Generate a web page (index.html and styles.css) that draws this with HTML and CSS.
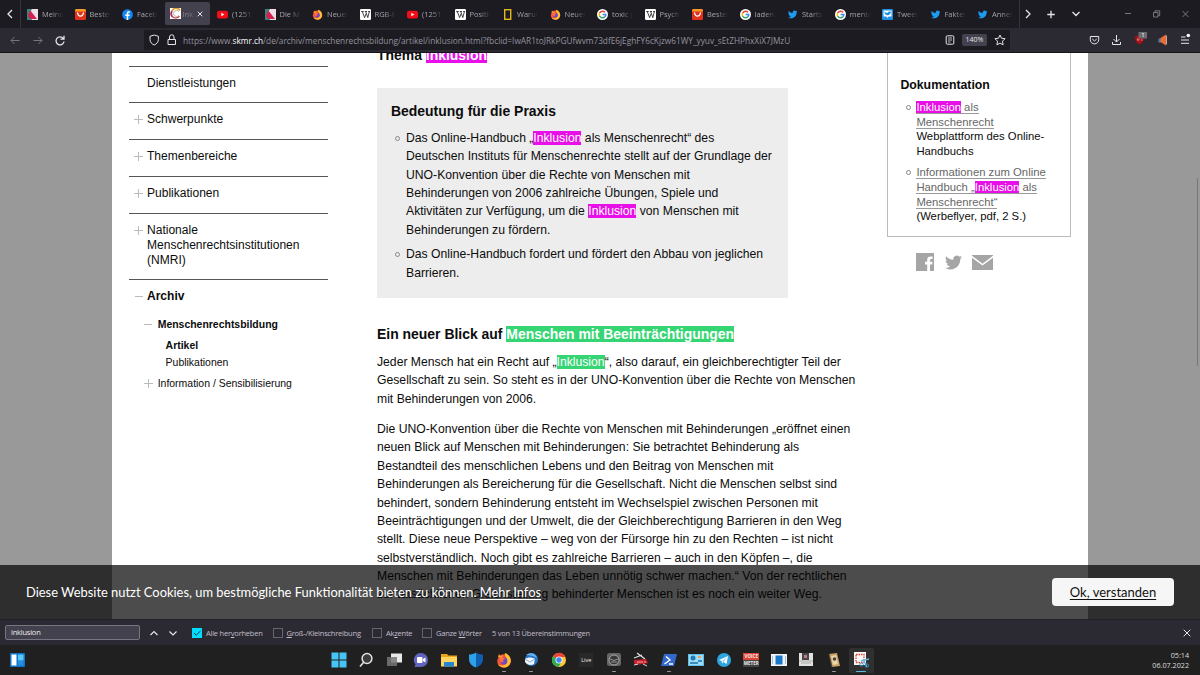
FILE: index.html
```html
<!DOCTYPE html>
<html lang="de">
<head>
<meta charset="utf-8">
<title>Inklusion</title>
<link rel="stylesheet" href="styles.css">
</head>
<body>
<svg width="0" height="0" class="defs">
  <defs>
    <symbol id="nzz" viewBox="0 0 11 11"><rect width="11" height="11" fill="#e9e3ea"/><path d="M0 0h5l-3 5 3 6H0z" fill="#37877f"/><path d="M3 1l7 9H3l-2-3z" fill="#d3204f"/><path d="M5 0h6v10z" fill="#f0dfe6"/></symbol>
    <symbol id="ali" viewBox="0 0 11 11"><rect width="11" height="11" rx="1.5" fill="#e0321c"/><path d="M0 2.4V1.5Q0 0 1.500 0h8Q11 0 11 1.500v.9z" fill="#f79a22"/><path d="M2.600 4c.6 4.200 5.200 4.200 5.800 0" fill="none" stroke="#fff" stroke-width="1.300" stroke-linecap="round"/></symbol>
    <symbol id="fb" viewBox="0 0 11 11"><circle cx="5.500" cy="5.500" r="5.300" fill="#1588f4"/><path d="M4.700 11V7H3.300V5.400h1.400V4.300q0-2 2-2h1.100v1.500h-.9q-.7 0-.7.800v.8h1.600L7.500 7H6.200v4z" fill="#fff"/></symbol>
    <symbol id="skmr" viewBox="0 0 11 11"><rect width="11" height="11" fill="#fff"/><path d="M10 2.500A4.400 4.400 0 0 0 2 3.200" fill="none" stroke="#e59b24" stroke-width="1.600"/><path d="M2 3A5 5 0 0 0 2.500 9" fill="none" stroke="#a63265" stroke-width="1.800"/><path d="M2.500 8.600c2 2 5 1.600 7-.3" fill="none" stroke="#c73243" stroke-width="1.300"/><path d="M9 3.500a3.100 3.100 0 1 0 0 4" fill="none" stroke="#aeb6a5"/></symbol>
    <symbol id="yt" viewBox="0 0 11 11"><rect y="1.800" width="11" height="7.600" rx="2" fill="#f40d16"/><path d="M4.300 3.700v3.600l3.100-1.800z" fill="#fff"/></symbol>
    <symbol id="ff" viewBox="0 0 16 16"><circle cx="8" cy="9" r="6.800" fill="#f5523d"/><path d="M9 1c5 2 6.500 6 5.500 9.500-1 3-3.500 5-6.500 5-4 0-6-3-6-3 6 3 10-1 9-5C10.500 5 8 4 9 1z" fill="#ffc22e"/><path d="M2 5l1-3 1.500 2L7 3 6 6z" fill="#ff9a24"/><circle cx="8" cy="9" r="3.400" fill="#7047c5"/><path d="M4 6c3-1 4 0 5 1L6.500 8.500 8 10c-3 1-5-1-4-4z" fill="#ff7139"/></symbol>
    <symbol id="wiki" viewBox="0 0 11 11"><rect width="11" height="11" rx="1.200" fill="#fff"/><path d="M1.200 2.500h2.500M4.800 2.500H7M8.100 2.500h2M2.300 2.600l2.300 6L6.100 4.700M5.700 2.600l2.100 6 1.600-6" fill="none" stroke="#222" stroke-width=".85"/></symbol>
    <symbol id="ng" viewBox="0 0 11 11"><rect x="2.700" y=".7" width="6" height="9.600" fill="none" stroke="#e6b91b" stroke-width="1.400"/></symbol>
    <symbol id="goo" viewBox="0 0 11 11"><circle cx="5.500" cy="5.500" r="5.500" fill="#fff"/><g fill="none" stroke-width="1.500"><path d="M8.100 3.400A3.300 3.300 0 0 0 2.600 4" stroke="#ea4335"/><path d="M2.600 4a3.300 3.300 0 0 0 0 3" stroke="#fbbc05"/><path d="M2.600 7a3.300 3.300 0 0 0 5.200.900" stroke="#34a853"/><path d="M7.800 7.900a3.300 3.300 0 0 0 1-2.400H5.600" stroke="#4285f4"/></g></symbol>
    <symbol id="tw" viewBox="0 0 24 24"><path d="M23.950 4.570a10 10 0 0 1-2.820.775 4.958 4.958 0 0 0 2.160-2.723 9.990 9.990 0 0 1-3.120 1.190 4.920 4.920 0 0 0-8.380 4.482C7.690 8.094 4.070 6.130 1.640 3.160a4.822 4.822 0 0 0-.666 2.475c0 1.710.87 3.213 2.188 4.096a4.904 4.904 0 0 1-2.228-.616v.060a4.923 4.923 0 0 0 3.946 4.827 4.996 4.996 0 0 1-2.212.085 4.936 4.936 0 0 0 4.604 3.417A9.867 9.867 0 0 1 0 19.540a13.995 13.995 0 0 0 7.557 2.209c9.053 0 13.998-7.496 13.998-13.985 0-.21 0-.42-.015-.63A9.935 9.935 0 0 0 23.950 4.570z"/></symbol>
    <symbol id="twbox" viewBox="0 0 11 11"><rect width="11" height="11" rx="1" fill="#1d91e3"/><path d="M1.500 1.500h8v6H6.700L5.500 9 4.300 7.500H1.500z" fill="#fff"/><path d="M9 2.800C7.500 2 6 2.500 5.600 4 4 4 3 3 2.500 2.500c0 1.500.5 3 2 3.500C6.500 7 8.500 5.500 9 2.800z" fill="#1d91e3"/></symbol>
  </defs>
</svg>
<div class="screen">
  <header class="tabbar">
    <div class="scroll-left"><svg class="ic" width="8" height="10" viewBox="0 0 8 10"><path d="M6 1L2 5l4 4"/></svg></div>
    <div class="tabs">
      <div class="tab"><svg><use href="#nzz"/></svg><span>Meine</span></div>
      <div class="tab"><svg><use href="#ali"/></svg><span>Bestell</span></div>
      <div class="tab"><svg><use href="#fb"/></svg><span>Facebo</span></div>
      <div class="tab active"><svg><use href="#skmr"/></svg><span>Inklu</span><svg class="close" viewBox="0 0 6 6"><path d="M.7.7l4.600 4.600M5.300.7L.7 5.300"/></svg></div>
      <div class="tab"><svg><use href="#yt"/></svg><span>(1251)</span></div>
      <div class="tab"><svg><use href="#nzz"/></svg><span>Die Me</span></div>
      <div class="tab"><svg><use href="#ff"/></svg><span>Neuer</span></div>
      <div class="tab"><svg><use href="#wiki"/></svg><span>RGB-F</span></div>
      <div class="tab"><svg><use href="#yt"/></svg><span>(1251)</span></div>
      <div class="tab"><svg><use href="#wiki"/></svg><span>Positiv</span></div>
      <div class="tab"><svg><use href="#ng"/></svg><span>Warum</span></div>
      <div class="tab"><svg><use href="#ff"/></svg><span>Neuer</span></div>
      <div class="tab"><svg><use href="#goo"/></svg><span>toxic p</span></div>
      <div class="tab"><svg><use href="#wiki"/></svg><span>Psycho</span></div>
      <div class="tab"><svg><use href="#ali"/></svg><span>Bestell</span></div>
      <div class="tab"><svg><use href="#goo"/></svg><span>ladenz</span></div>
      <div class="tab bird"><svg><use href="#tw"/></svg><span>Startse</span></div>
      <div class="tab"><svg><use href="#goo"/></svg><span>menta</span></div>
      <div class="tab"><svg><use href="#twbox"/></svg><span>Tweete</span></div>
      <div class="tab bird"><svg><use href="#tw"/></svg><span>Fakten</span></div>
      <div class="tab bird"><svg><use href="#tw"/></svg><span>Annet</span></div>
    </div>
    <svg class="ic winicons" width="180" height="28" viewBox="0 0 180 28"><path d="M6 10l4 4-4 4M27.300 14.500h7.400M31 10.800v7.400M52.500 12l3.500 3.500 3.500-3.500"/><g stroke="#8e8c94" stroke-width=".8"><path d="M105 13.500h6M133.500 12.500h4.500V17h-4.500zM135 12v-1.200h4.700v4.800h-1.400M162.500 11l6 6M168.500 11l-6 6"/></g></svg>
  </header>
  <div class="navbar">
    <svg class="ic navicons" width="145" height="24" viewBox="0 0 145 24"><g stroke="#77757e"><path d="M19.500 12.500H11M14.500 9L11 12.500l3.500 3.500M33.500 12.500H42M38.500 9l3.500 3.500-3.500 3.500"/></g><path stroke-width="1.300" d="M63.200 10.400A4 4 0 1 0 64 13.500M64 7.800v3.400h-3.500"/></svg>
    <div class="urlbar">
      <svg class="ic" width="38" height="20" viewBox="0 0 38 20"><path d="M10.200 5l4.200 1.300v3c0 3-1.800 4.700-4.200 5.700C7.800 14 6 12.300 6 9.300v-3zM24 9.500h7.500v5H24zM25.500 9.500V7a2.200 2.200 0 0 1 4.500 0v2.500"/></svg>
      <div class="url">https://www.<b>skmr.ch</b>/de/archiv/menschenrechtsbildung/artikel/inklusion.html?fbclid=IwAR1toJRkPGUfwvm73dfE6jEghFY6cKjzw61WY_yyuv_sEtZHPhxXiX7JMzU</div>
      <svg class="ic reader" width="10" height="10" viewBox="0 0 10 10"><rect x="1.200" y=".8" width="7.600" height="8.400" rx="1"/><path d="M3 3h4M3 5h4M3 7h2.500" stroke-width=".8"/></svg>
      <span class="zoom">140%</span>
      <svg class="ic star" width="12" height="12" viewBox="0 0 12 12"><path d="M6 1l1.500 3.200 3.500.5-2.500 2.500.6 3.600L6 9.100l-3.100 1.700.6-3.600L1 4.700l3.500-.5z"/></svg>
    </div>
    <svg class="ic extras" width="115" height="24" viewBox="0 0 115 24"><path d="M6.300 8.500h8.400v3.200a4.200 4.200 0 0 1-8.400 0zM8.300 11l2.200 2 2.200-2M32.500 7v7M29.500 11l3 3 3-3M28.500 14v2.500h8V14"/><path d="M51 8.500l4.500-1.500L60 8.500c0 4-1 6-4.500 8-3.500-2-4.500-4-4.500-8z" fill="#a5151b" stroke="#77161c"/><path d="M53.500 10.500v1.700h1.500v-1.500M57 12h1.500" stroke="#e6adb0" stroke-width=".7"/><rect x="54.500" y="4" width="8.500" height="6.500" fill="#6c6a72" stroke="none"/><path d="M74.500 10.500h3v4h-3z" fill="#4682a5" stroke="none"/><path d="M76.500 10l5.500-3.500v11l-5.500-3.500z" fill="#ec6b35" stroke="none"/><path d="M82.500 7.500v9" stroke="#b9aaa7"/><path d="M97 9h4.500M97 12h8M97 15.300h8"/><circle cx="104.300" cy="7.500" r="1.800" fill="#fbfbfe" stroke="none"/></svg>
    <span class="badge">1</span>
  </div>

  <div class="viewport">
    <div class="page">
      <nav class="sidenav">
        <div class="item"><i></i><span>Dienstleistungen</span></div>
        <div class="item"><i class="plus"></i><span>Schwerpunkte</span></div>
        <div class="item"><i class="plus"></i><span>Themenbereiche</span></div>
        <div class="item"><i class="plus"></i><span>Publikationen</span></div>
        <div class="item tall"><i class="plus"></i><span>Nationale<br>Menschenrechtsinstitutionen<br>(NMRI)</span></div>
        <div class="item open"><i class="minus"></i><span>Archiv</span></div>
        <div class="sub first"><i class="minus"></i><b>Menschenrechtsbildung</b></div>
        <div class="leaf"><b>Artikel</b></div>
        <div class="leaf two">Publikationen</div>
        <div class="sub last"><i class="plus"></i><span>Information / Sensibilisierung</span></div>
      </nav>
      <main class="content">
        <h2 class="thema">Thema <mark>Inklusion</mark></h2>
        <section class="praxis">
          <h2>Bedeutung für die Praxis</h2>
          <ul>
            <li>Das Online-Handbuch „<mark>Inklusion</mark> als Menschenrecht“ des<br>Deutschen Instituts für Menschenrechte stellt auf der Grundlage der<br>UNO-Konvention über die Rechte von Menschen mit<br>Behinderungen von 2006 zahlreiche Übungen, Spiele und<br>Aktivitäten zur Verfügung, um die <mark>Inklusion</mark> von Menschen mit<br>Behinderungen zu fördern.</li>
            <li>Das Online-Handbuch fordert und fördert den Abbau von jeglichen<br>Barrieren.</li>
          </ul>
        </section>
        <h2 class="blick">Ein neuer Blick auf <mark class="green">Menschen mit Beeinträchtigungen</mark></h2>
        <p>Jeder Mensch hat ein Recht auf „<mark class="green">Inklusion</mark>“, also darauf, ein gleichberechtigter Teil der<br>Gesellschaft zu sein. So steht es in der UNO-Konvention über die Rechte von Menschen<br>mit Behinderungen von 2006.</p>
        <p>Die UNO-Konvention über die Rechte von Menschen mit Behinderungen „eröffnet einen<br>neuen Blick auf Menschen mit Behinderungen: Sie betrachtet Behinderung als<br>Bestandteil des menschlichen Lebens und den Beitrag von Menschen mit<br>Behinderungen als Bereicherung für die Gesellschaft. Nicht die Menschen selbst sind<br>behindert, sondern Behinderung entsteht im Wechselspiel zwischen Personen mit<br>Beeinträchtigungen und der Umwelt, die der Gleichberechtigung Barrieren in den Weg<br>stellt. Diese neue Perspektive – weg von der Fürsorge hin zu den Rechten – ist nicht<br>selbstverständlich. Noch gibt es zahlreiche Barrieren – auch in den Köpfen –, die<br>Menschen mit Behinderungen das Leben unnötig schwer machen.“ Von der rechtlichen<br>zur tatsächlichen Gleichstellung behinderter Menschen ist es noch ein weiter Weg.</p>
      </main>
      <aside class="aside">
        <section class="docs">
          <h3>Dokumentation</h3>
          <ul>
            <li><a><mark>Inklusion</mark> als</a><br><a>Menschenrecht</a><br>Webplattform des Online-<br>Handbuchs</li>
            <li><a>Informationen zum Online</a><br><a>Handbuch „<mark>Inklusion</mark> als</a><br><a>Menschenrecht“</a><br>(Werbeflyer, pdf, 2 S.)</li>
          </ul>
        </section>
        <div class="share">
          <svg width="18" height="18" viewBox="0 0 18 18"><path fill-rule="evenodd" d="M0 0h18v18h-4v-6.500h2.200l.3-2.700H14V7.200q0-1.200 1.200-1.200h1.400V3.400h-2q-3.400 0-3.400 3.400v2H9v2.700h2.200V18H0z"/></svg>
          <svg width="17" height="17" viewBox="0 0 24 24"><use href="#tw"/></svg>
          <svg width="21" height="15" viewBox="0 0 21 15"><path d="M0 0h21v.7l-10.500 8L0 .7zM0 2.800l10.500 7.800L21 2.800V15H0z"/></svg>
        </div>
      </aside>
    </div>
    <div class="scrollthumb"></div>
    <div class="cookie">
      <span class="ctext">Diese Website nutzt Cookies, um bestmögliche Funktionalität bieten zu können. <u>Mehr Infos</u></span>
      <span class="ok"><u>Ok, verstanden</u></span>
    </div>
  </div>

  <div class="findbar">
    <div class="query">inklusion</div>
    <svg class="ic arrows" width="30" height="12" viewBox="0 0 30 12"><path d="M2.500 8L6 4.500 9.500 8M21.500 4.500L25 8l3.500-3.500"/></svg>
    <span class="check on"><i><svg class="tick" width="10" height="10" viewBox="0 0 10 10"><path d="M2 5l2.200 2.200L8.500 3"/></svg></i><span>Alle her<u>v</u>orheben</span></span>
    <span class="check c2"><i></i><span><u>G</u>roß-/Kleinschreibung</span></span>
    <span class="check c3"><i></i><span>Ak<u>z</u>ente</span></span>
    <span class="check c4"><i></i><span>Ganze <u>W</u>örter</span></span>
    <span class="matches">5 von 13 Übereinstimmungen</span>
    <svg class="ic fclose" width="8" height="8" viewBox="0 0 8 8"><path d="M.7.7l6.600 6.600M7.300.7L.7 7.300"/></svg>
  </div>

  <footer class="taskbar">
    <svg class="widgets" width="15" height="14" viewBox="0 0 15 14"><rect width="15" height="14" rx="1" fill="#1173c9"/><rect x="1.500" y="1.500" width="5" height="11" fill="#fff"/><rect x="8" y="1.500" width="5.500" height="6" fill="#5ac8f7"/><rect x="8" y="8" width="5.500" height="4.500" fill="#258fe2"/></svg>
    <div class="apps">
      <div class="app"><svg viewBox="0 0 16 16"><path d="M.5.5h7v7h-7zM8.500.5h7v7h-7zM.5 8.500h7v7h-7zM8.500 8.500h7v7h-7z" fill="#45c4f5"/></svg></div>
      <div class="app"><svg viewBox="0 0 16 16"><circle cx="9" cy="6.500" r="4.900" fill="#3b3b3d" stroke="#e2e2e2" stroke-width="1.500"/><path d="M5.500 10.500L2 14.500" stroke="#e2e2e2" stroke-width="1.700"/></svg></div>
      <div class="app"><svg viewBox="0 0 16 16"><path d="M5 1.500h11v9H5z" fill="#e9e9e9"/><path d="M1 5h10v9H1z" fill="#777" fill-opacity=".85"/></svg></div>
      <div class="app"><svg viewBox="0 0 16 16"><path d="M8 1a7 7 0 0 1 0 14H1.500l1-2.500A7 7 0 0 1 8 1z" fill="#6264bd"/><rect x="4" y="5" width="5.500" height="6" rx="1" fill="#fff"/><path d="M10 7l2.500-1.500v5L10 9z" fill="#fff"/></svg></div>
      <div class="app"><svg viewBox="0 0 16 16"><path d="M0 2h6l1.500 1.500H16V14H0z" fill="#e7a51e"/><path d="M0 5h16v9.500H0z" fill="#ffd460"/><path d="M3 10h10v4.500H3z" fill="#2386d3"/></svg></div>
      <div class="app"><svg viewBox="0 0 16 16"><path d="M8 .5c2 1.500 4.500 2 7 2V7c0 4.500-3 7-7 8.500z" fill="#0e5fb0"/><path d="M8 .5c-2 1.500-4.500 2-7 2V7c0 4.500 3 7 7 8.500z" fill="#2ea2e8"/></svg></div>
      <div class="app run"><svg viewBox="0 0 16 16"><use href="#ff"/></svg></div>
      <div class="app run"><svg viewBox="0 0 16 16"><circle cx="8.500" cy="7.500" r="6.500" fill="#2474c6"/><path d="M2 7c3-2 7-2 10 0l-1 5c-3 2-7 1-9-2z" fill="#eef5fb"/><path d="M3 3c4-3 10-2 11 3-3-2-7-3-11-3z" fill="#65b4ef"/><path d="M2 7l5 3 5-3" fill="none" stroke="#8baed0"/></svg></div>
      <div class="app"><svg viewBox="0 0 16 16"><circle cx="8" cy="8" r="7" fill="#fcc934"/><path d="M8 8L2 4.300A7 7 0 0 1 14.500 5H8z" fill="#e94335"/><path d="M8 8L2 4.300A7 7 0 0 0 7.500 15l3.200-5.500z" fill="#31a853"/><circle cx="8" cy="8" r="3.500" fill="#fff"/><circle cx="8" cy="8" r="2.700" fill="#4285f4"/></svg></div>
      <div class="app live"><span>Live</span></div>
      <div class="app run"><svg viewBox="0 0 16 16"><rect x="1" y="1" width="14" height="13" rx="2.500" fill="#656565"/><circle cx="8" cy="8" r="5" fill="#383838" stroke="#aaa"/><path d="M4 7q4 3 8 0M5 10h6" fill="none" stroke="#bbb" stroke-width=".7"/></svg></div>
      <div class="app"><svg viewBox="0 0 16 16"><path d="M4 1l8 6M1 6l8-3" stroke="#ddd" stroke-width="1.300"/><path d="M1 8l12-1 2 4-5 1-7 1-2-2z" fill="#c7212a"/><path d="M4 10h6M12 9v2" stroke="#f1a6a6"/><path d="M1 13l4-1M10 12l4 2" stroke="#ddd"/></svg></div>
      <div class="app run"><svg viewBox="0 0 16 16"><path d="M3 2h13l-3 12H0z" fill="#3469cc"/><path d="M5 4.500l4 3.500-5.500 4M8 12h4" fill="none" stroke="#fff" stroke-width="1.400"/></svg></div>
      <div class="app"><svg viewBox="0 0 16 16"><path d="M0 2h16v12H0z" fill="#62bce9"/><path d="M1 3h14v10H1z" fill="#9cddf5"/><circle cx="5" cy="6" r="2.500" fill="#207bb8"/><path d="M2 11h8M10 9h4" stroke="#1a70a8" stroke-width="1.500"/><path d="M10 4h3v2h-3z" fill="#eba45f"/></svg></div>
      <div class="app"><svg viewBox="0 0 16 16"><circle cx="8" cy="8" r="7" fill="#2da5df"/><path d="M3 8l9-4-1.500 8-3-2-1.500 1.500L5.700 9z" fill="#fff"/><path d="M6 9l5-4-3.500 5z" fill="#8bc8e7"/></svg></div>
      <div class="app voice"><span>VOICE</span><span>METER</span></div>
      <div class="app"><svg viewBox="0 0 16 16"><path d="M0 2h16v12H0z" fill="#f4f4f4"/><rect x="4.500" y="3.500" width="7" height="9" fill="#1578cb"/><path d="M1.500 4v8M14.500 4v8" stroke="#9bc4de"/></svg></div>
      <div class="app"><svg viewBox="0 0 16 16"><path d="M1 1h14v13H1z" fill="#e3e1df"/><path d="M4 1h7v7H4z" fill="#494445"/><path d="M6 3h3v3H6z" fill="#b87e80"/><path d="M1 9h14M3 11h10" stroke="#aaa"/></svg></div>
      <div class="app run"><svg viewBox="0 0 16 16"><path d="M3 2l8-1 3 13-8 1z" fill="#cba265"/><path d="M5 4l5-1 2 9-5 1z" fill="#e8d5aa"/><circle cx="8.500" cy="7" r="1.800" fill="#4b4338"/><path d="M3 2l3 13" stroke="#534b43"/></svg></div>
      <div class="app run current"><svg viewBox="0 0 16 16"><path d="M1 0h12v13H1z" fill="#f8f8f8"/><path d="M3 2.500h8v8H3z" fill="none" stroke="#dc3e2c" stroke-width="1.300" stroke-dasharray="1.500 1"/><path d="M8 9l8-2M10 7l4 8" stroke="#64b6df" stroke-width="1.300"/><circle cx="8.500" cy="12.500" r="1.700" fill="none" stroke="#368fc2"/><circle cx="13.800" cy="13.500" r="1.700" fill="none" stroke="#368fc2"/></svg></div>
    </div>
    <div class="clock">05:14<br>06.07.2022</div>
  </footer>
</div>
</body>
</html>
```
FILE: styles.css
```css
*, *::before, *::after { box-sizing: border-box; }
body { margin: 0; background: #202020; }
.defs { position: absolute; }
.screen { width: 1200px; height: 675px; overflow: hidden; display: flex; flex-direction: column; font-family: "Open Sans", "Noto Sans", sans-serif; font-size: 7.5px; }
svg { display: block; flex: none; }
.ic { fill: none; stroke: #e6e5eb; stroke-width: 1; }
i { display: block; font-style: normal; }

.tabbar { height: 28px; background: #1c1b22; display: flex; flex: none; }
.scroll-left { width: 21px; border-right: 1px solid #35343c; display: flex; align-items: center; padding-left: 6px; }
.scroll-left path { stroke-width: 1.3; }
.tabs { width: 999px; padding-left: 1px; display: flex; border-right: 1px solid #35343c; }
.tab { width: 47.5px; flex: none; display: flex; align-items: center; padding-left: 5px; color: #a6a4ab; }
.tab > svg { width: 11px; height: 11px; }
.tab > span { width: 21px; margin-left: 4px; overflow: hidden; white-space: nowrap; line-height: 12px; -webkit-mask-image: linear-gradient(90deg, #000 45%, transparent); mask-image: linear-gradient(90deg, #000 45%, transparent); }
.tab.bird svg { fill: #1d9bf0; width: 9.5px; margin: 0 .5px 0 1px; }
.tab.active { width: 45px; height: 23px; margin: 2px 2.5px 0 0; background: #42414d; border-radius: 2px; }
.tab.active > span { width: 12px; margin-left: 2px; opacity: .7; }
.tab > .close { width: 6px; height: 6px; margin-left: 2.5px; fill: none; stroke: #e4e3e8; }
.winicons { width: 180px; }
.winicons > path { stroke-width: 1.3; }

.navbar { height: 25px; background: #2b2a33; display: flex; flex: none; border-bottom: 1px solid #15141a; position: relative; }
.urlbar { width: 866px; height: 20px; margin: 2px 0 0 -1px; background: #1c1b22; border-radius: 2px; display: flex; align-items: center; color: #96949d; }
.url { width: 757px; white-space: nowrap; font-size: 8.28px; line-height: 14px; padding: 1px 0 0 1px; }
.url b { font-weight: 400; color: #fbfbfe; }
.reader { margin-left: 6px; }
.zoom { background: #42414d; color: #e4e3e8; border-radius: 2px; width: 25px; height: 12px; line-height: 12px; font-size: 7px; text-align: center; margin-left: 7px; }
.star { margin-left: 7px; }
.extras { margin-left: 74px; }
.badge { position: absolute; left: 1139px; top: 4px; width: 8px; line-height: 7px; font-size: 6px; color: #fff; text-align: center; }

.viewport { height: 566px; flex: none; background: #999; position: relative; overflow: hidden; font-family: "Liberation Sans", Arial, sans-serif; color: #0c0c0c; white-space: nowrap; }
.page { width: 976px; height: 566px; margin-left: 112px; background: #fff; display: flex; overflow: hidden; }
.sidenav { width: 199px; margin-left: 17px; padding-top: 12.6px; font-size: 12.04px; line-height: 15.3px; flex: none; }
.sidenav i { width: 9px; height: 15px; flex: none; }
.item { height: 36.8px; border-top: 1px solid #555; padding: 9px 0 0 5px; display: flex; gap: 4px; }
.item.tall { height: 66px; }
.item.open { font-weight: 700; }
.minus { background: linear-gradient(#bbb, #bbb) center/8px 1px no-repeat; }
.plus { background: linear-gradient(#bbb, #bbb) center/9px 1px no-repeat, linear-gradient(#bbb, #bbb) center/1px 9px no-repeat; }
.sub { display: flex; gap: 5px; padding-left: 14.7px; font-size: 10.46px; }
.sub.first { margin-top: 1px; }
.leaf { padding-left: 36.6px; font-size: 10.46px; margin-top: 6px; }
.leaf.two { margin-top: 2px; }
.sub.last { margin-top: 6px; }

.content { width: 480px; margin-left: 49px; flex: none; font-size: 12.2px; line-height: 18.36px; }
h2, h3, p, ul { margin: 0; padding: 0; }
h2 { font-size: 13.95px; line-height: 18px; }
mark { background: #e80fe8; color: #fff; }
mark.green { background: #35d573; }
.thema { margin-top: -7px; height: 42px; }
.praxis { width: 411px; height: 210px; background: #ededed; padding: 14px 14px 0; }
.praxis ul { list-style: none; margin-top: 9px; }
li { position: relative; }
li::before { content: ""; position: absolute; left: -11px; top: 7px; width: 5px; height: 5px; border: 1px solid #888; border-radius: 50%; }
.praxis li { margin: 0 0 6px 15px; }
.blick { margin: 27px 0 10px; }
.content p { margin-bottom: 12px; }

.aside { width: 184px; margin-left: 30.4px; flex: none; }
.docs { height: 183.5px; border: 1px solid #bbb; border-top: 0; padding: 24px 0 0 12px; font-size: 11.3px; line-height: 14.6px; }
.docs h3 { font-size: 12.3px; line-height: 17px; }
.docs ul { list-style: none; margin-top: 6px; }
.docs li { margin: 0 0 7px 16px; }
.docs li::before { left: -10px; top: 5px; }
.docs a { color: #666; border-bottom: 1px solid #999; }
.share { display: flex; align-items: center; margin: 16.5px 0 0 29px; fill: #a5a5a5; gap: 10.5px; }
.scrollthumb { position: absolute; left: 1197px; top: 125px; width: 1px; height: 188px; background: #777; }

.cookie { position: absolute; left: 0; right: 0; bottom: 0; height: 54px; background: rgba(0,0,0,.7); display: flex; align-items: center; justify-content: space-between; padding: 0 26px; font-family: Lato, "Open Sans", sans-serif; font-size: 13px; color: #fff; }
.ctext { font-size: 12.9px; }
.ok { width: 122px; height: 28px; line-height: 28px; border-radius: 4px; background: #f6f6f6; color: #111; text-align: center; }
.cookie u { text-underline-offset: 2px; }

.findbar { height: 26px; background: #2b2a33; flex: none; display: flex; align-items: center; padding-left: 5px; color: #c1bfc8; border-top: 1px solid #22212a; white-space: nowrap; letter-spacing: -.22px; }
.query { width: 135px; height: 15px; line-height: 13px; padding-left: 5px; background: #42414d; border: 1px solid #77757f; border-radius: 2px; color: #eee; }
.arrows { margin-left: 8px; }
.arrows path { stroke-width: 1.2; }
.check { display: flex; align-items: center; gap: 4px; margin-left: 14px; width: 66px; }
.check i { width: 10px; height: 10px; border: 1px solid #66646e; flex: none; }
.check.on i { background: #00ddff; border: 0; }
.tick { fill: none; stroke: #234; }
.check.c2 { width: 90px; margin-left: 14.5px; }
.check.c3 { width: 40px; margin-left: 9.5px; }
.check.c4 { width: 60px; margin-left: 10px; }
.matches { margin-left: 10px; width: 98px; }
.fclose { margin-left: auto; margin-right: 9px; }

.taskbar { height: 30px; flex: none; background: #202020; display: flex; align-items: center; }
.widgets { margin-left: 10px; }
.apps { display: flex; margin-left: 300px; }
.app { width: 27.5px; height: 30px; display: flex; flex-direction: column; align-items: center; justify-content: center; position: relative; }
.app > svg { width: 16px; height: 16px; }
.run::after { content: ""; position: absolute; bottom: 3px; width: 4px; height: 1.5px; border-radius: 1px; background: #999; }
.current::before { content: ""; position: absolute; inset: 3px 1px 2px; background: #303030; border-radius: 2px; z-index: 0; }
.current > svg { position: relative; }
.current::after { width: 10px; background: #55bde8; }
.live span { color: #eee; font-size: 5.5px; background: #292929; width: 14px; line-height: 14px; text-align: center; }
.voice span { width: 16px; line-height: 7px; font-size: 4.5px; font-weight: 700; text-align: center; color: #eee; background: #444; }
.voice span:first-child { background: #e04235; }
.clock { margin-left: auto; margin-right: 11px; text-align: right; line-height: 10px; color: #ddd; font-size: 7.2px; }
```
